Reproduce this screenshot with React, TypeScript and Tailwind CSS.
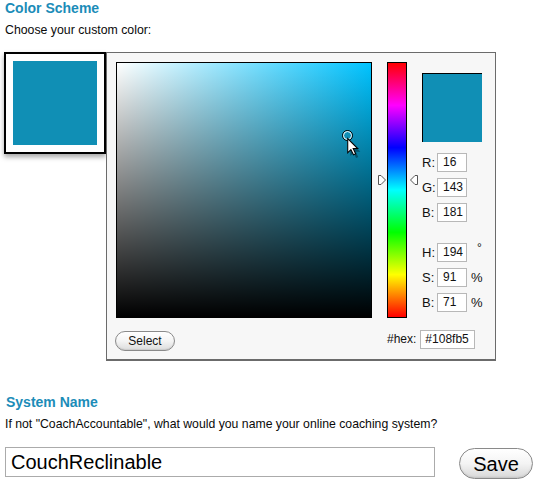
import React from "react";

const font = { fontFamily: '"Liberation Sans", Arial, sans-serif' };

function Field({ label, value, unit, unitClass }: { label: string; value: string; unit?: string; unitClass?: string }) {
  return (
    <div className="flex items-center h-[19px]">
      <span className="w-[15px] text-[13px] leading-[19px] text-[#111]">{label}</span>
      <div className="w-[30px] h-[19px] border border-[#b8b8b8] bg-white text-[12px] leading-[17px] pl-[5px] text-[#111]">{value}</div>
      {unit ? <span className={unitClass}>{unit}</span> : null}
    </div>
  );
}

function Cursor() {
  return (
    <svg className="absolute left-[229px] top-[74px]" width="15" height="21" viewBox="0 0 14 20">
      <path d="M2.5 3.5 L2.5 17 L5.5 14 L8 19 L10 18 L7.7 13 L12 13 Z" fill="#000" opacity="0.35" transform="translate(1.5 1)" />
      <path d="M1.5 1.5 L1.5 15 L4.5 12 L7 17 L9 16 L6.7 11 L11 11 Z" fill="#fff" stroke="#000" strokeWidth="1" strokeLinejoin="miter" />
    </svg>
  );
}

export default function App() {
  return (
    <div className="w-[540px] h-[488px] bg-white relative overflow-hidden" style={font}>
      <div className="pl-[5px] text-[14px] leading-[16px] font-bold text-[#1b8cb8]">Color Scheme</div>
      <div className="pl-[5px] mt-[7px] text-[12.3px] leading-[14px] text-[#0a0a0a]">Choose your custom color:</div>

      <div className="flex mt-[15px] ml-[4px]">
        <div className="w-[102px] h-[102px] border-2 border-black bg-white p-[7px] shadow-[0_3px_5px_rgba(0,0,0,0.35)]">
          <div className="w-[84px] h-[84px] bg-[#108fb5]" />
        </div>

        <div className="w-[390px] h-[309px] border border-[#6b6b6b] border-b-2 bg-[#f7f7f7] pt-[9px] pl-[9px]">
          <div className="flex">
            <div className="relative w-[256px] h-[256px] border border-black bg-[#00c3ff]">
              <div className="absolute inset-0 bg-gradient-to-r from-white to-transparent" />
              <div className="absolute inset-0 bg-gradient-to-b from-transparent to-black" />
              <div className="absolute left-[225px] top-[67px] w-[11px] h-[11px] rounded-full border border-black">
                <div className="w-full h-full rounded-full border border-white" />
              </div>
              <Cursor />
            </div>

            <div className="relative ml-[15px] w-[20px] h-[256px] border border-black bg-[linear-gradient(to_bottom,#ff0000,#ff00ff,#0000ff,#00ffff,#00ff00,#ffff00,#ff0000)]">
              <svg className="absolute left-[-10px] top-[112px]" width="8" height="10" viewBox="0 0 8 10">
                <path d="M0.5 0.5 L0.5 9.5 L3 9.5 L7.5 5 L3 0.5 Z" fill="#fff" stroke="#555" strokeWidth="1" />
              </svg>
              <svg className="absolute left-[22px] top-[112px]" width="8" height="10" viewBox="0 0 8 10">
                <path d="M7.5 0.5 L7.5 9.5 L5 9.5 L0.5 5 L5 0.5 Z" fill="#fff" stroke="#555" strokeWidth="1" />
              </svg>
            </div>

            <div className="ml-[15px] pt-[11px]">
              <div className="w-[60px] h-[69px] border-t border-l border-black bg-[#108fb5]" />
              <div className="mt-[11px] flex flex-col gap-[6px]">
                <Field label="R:" value="16" />
                <Field label="G:" value="143" />
                <Field label="B:" value="181" />
              </div>
              <div className="mt-[21px] flex flex-col gap-[6px]">
                <Field label="H:" value="194" unit="°" unitClass="ml-[10px] text-[12px] leading-[12px] self-start mt-[-1px] text-[#111]" />
                <Field label="S:" value="91" unit="%" unitClass="ml-[4px] text-[13px] leading-[19px] text-[#111]" />
                <Field label="B:" value="71" unit="%" unitClass="ml-[4px] text-[13px] leading-[19px] text-[#111]" />
              </div>
            </div>
          </div>

          <div className="flex">
            <button className="mt-[13px] ml-[-1px] w-[60px] h-[20px] rounded-full border border-[#8a8a8a] bg-gradient-to-b from-white via-[#f4f4f4] to-[#dcdcdc] text-[12px] leading-[18px] text-[#111] shadow-[inset_0_-1px_1px_rgba(0,0,0,0.08)]">
              Select
            </button>
            <div className="ml-[212px] mt-[10px] flex items-center">
              <span className="text-[12px] leading-[19px] text-[#111]">#hex:</span>
              <div className="ml-[4px] w-[55px] h-[19px] border border-[#b8b8b8] bg-white text-[12px] leading-[17px] pl-[4px] text-[#111]">#108fb5</div>
            </div>
          </div>
        </div>
      </div>

      <div className="pl-[6px] mt-[33px] text-[14px] leading-[16px] font-bold text-[#1b8cb8]">System Name</div>
      <div className="pl-[5px] mt-[7px] text-[12.25px] leading-[14px] text-[#0a0a0a]">If not "CoachAccountable", what would you name your online coaching system?</div>

      <div className="flex items-start mt-[16px] ml-[5px]">
        <div className="w-[430px] h-[30px] border border-[#ababab] bg-white pl-[5px] text-[20px] leading-[28px] text-black">CouchReclinable</div>
        <button className="ml-[24px] mt-[1px] w-[74px] h-[31px] rounded-full border border-[#8a8a8a] bg-gradient-to-b from-white via-[#f4f4f4] to-[#d8d8d8] text-[20px] leading-[28px] text-black shadow-[inset_0_-1px_2px_rgba(0,0,0,0.1)]">
          Save
        </button>
      </div>
    </div>
  );
}
